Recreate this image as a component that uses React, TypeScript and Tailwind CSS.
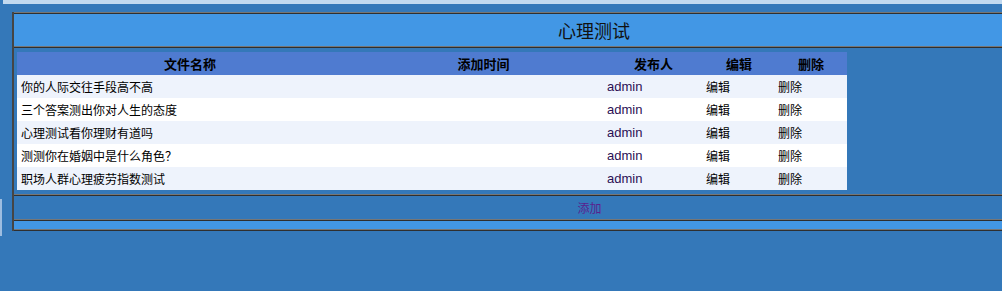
const rows = [
  "你的人际交往手段高不高",
  "三个答案测出你对人生的态度",
  "心理测试看你理财有道吗",
  "测测你在婚姻中是什么角色？",
  "职场人群心理疲劳指数测试",
];

function Sep() {
  return (
    <div>
      <div className="h-px bg-[#767676]" />
      <div className="h-px bg-[#2f2f2f]" />
    </div>
  );
}

export default function App() {
  return (
    <div
      className="relative w-full h-[291px] overflow-hidden bg-[#3478b9] text-[12px] text-black"
      style={{ fontFamily: '"Noto Sans CJK SC", "Liberation Sans", sans-serif' }}
    >
      {/* top strip */}
      <div className="ml-[3px] h-[4px] bg-[#c2d9ef]" />
      <div className="absolute left-0 top-[199px] w-[2px] h-[37px] bg-[#9dbde0]" />

      <div className="ml-[12px] mt-[8px] w-[1162px] border-l-2 border-[#454545]">
        <Sep />
        {/* title */}
        <div className="h-[32px] bg-[#4297e5] flex items-center justify-center text-[18px] leading-none text-[#111]">
          心理测试
        </div>
        <Sep />

        {/* list */}
        <div className="pt-[4px] pb-[4px] pl-[3px]">
          <div className="w-[830px]">
            <div className="grid grid-cols-[346px_241px_99px_72px_72px] h-[23px] items-center bg-[#4f7bd0] font-bold text-[13px]">
              <div className="text-center">文件名称</div>
              <div className="text-center">添加时间</div>
              <div className="text-center">发布人</div>
              <div className="text-center">编辑</div>
              <div className="text-center">删除</div>
            </div>
            {rows.map((name, i) => (
              <div
                key={name}
                className={
                  "grid grid-cols-[346px_241px_99px_72px_72px] h-[23px] items-center " +
                  (i % 2 === 0 ? "bg-[#eef3fc]" : "bg-white")
                }
              >
                <div className="pl-[4px]">{name}</div>
                <div />
                <div
                  className="pl-[3px] text-[13px] text-[#2c0f55]"
                  style={{ fontFamily: '"Liberation Sans", sans-serif' }}
                >
                  admin
                </div>
                <div className="pl-[3px]">编辑</div>
                <div className="pl-[3px]">删除</div>
              </div>
            ))}
          </div>
        </div>
        <Sep />

        {/* add */}
        <div className="h-[23px] flex items-center justify-center pr-[9px] text-[#5a1f8e]">
          添加
        </div>
        <Sep />
        <div className="h-[8px] bg-[#4297e5]" />
        <Sep />
      </div>
    </div>
  );
}
